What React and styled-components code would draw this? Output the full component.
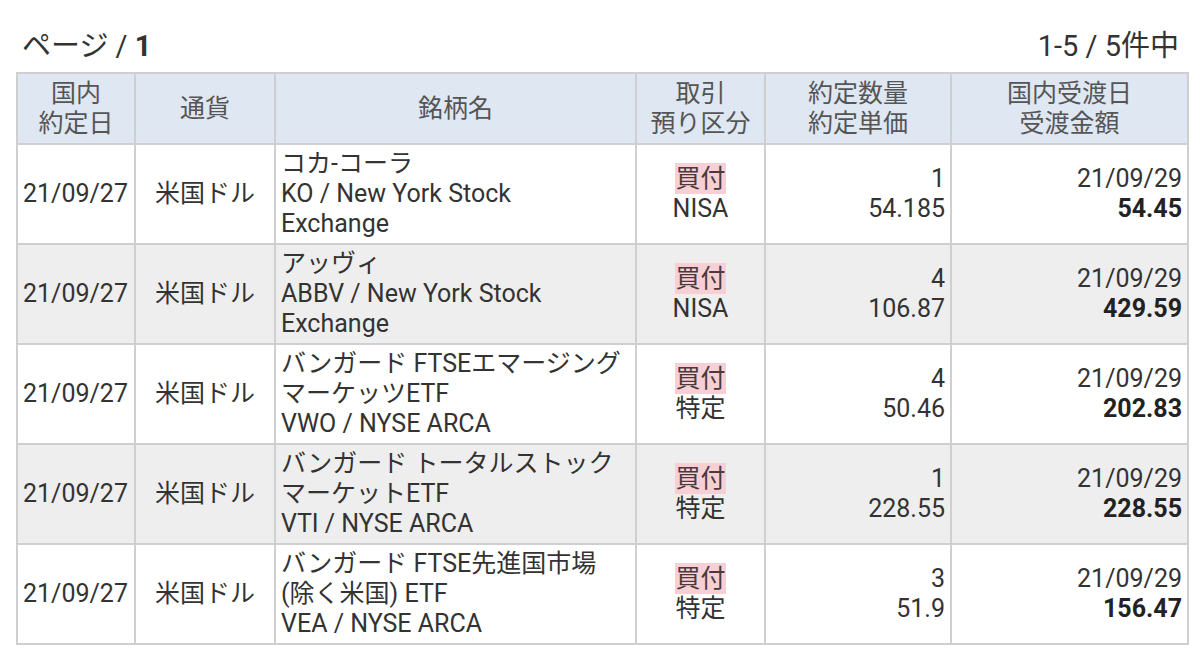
import React from 'react'
import styled, { createGlobalStyle } from 'styled-components'

const GlobalStyle = createGlobalStyle`
    body {
        margin: 0;
        background: #fff;
        font-family: Roboto, "Noto Sans CJK JP", sans-serif;
        color: #333;
    }
`;

const rows = [
    { date: '21/09/27', cur: '米国ドル', name: ['コカ-コーラ', 'KO / New York Stock', 'Exchange'], kind: '買付', acct: 'NISA', qty: '1', price: '54.185', settle: '21/09/29', amount: '54.45' },
    { date: '21/09/27', cur: '米国ドル', name: ['アッヴィ', 'ABBV / New York Stock', 'Exchange'], kind: '買付', acct: 'NISA', qty: '4', price: '106.87', settle: '21/09/29', amount: '429.59' },
    { date: '21/09/27', cur: '米国ドル', name: ['バンガード FTSEエマージング', 'マーケッツETF', 'VWO / NYSE ARCA'], kind: '買付', acct: '特定', qty: '4', price: '50.46', settle: '21/09/29', amount: '202.83' },
    { date: '21/09/27', cur: '米国ドル', name: ['バンガード トータルストック', 'マーケットETF', 'VTI / NYSE ARCA'], kind: '買付', acct: '特定', qty: '1', price: '228.55', settle: '21/09/29', amount: '228.55' },
    { date: '21/09/27', cur: '米国ドル', name: ['バンガード FTSE先進国市場', '(除く米国) ETF', 'VEA / NYSE ARCA'], kind: '買付', acct: '特定', qty: '3', price: '51.9', settle: '21/09/29', amount: '156.47' },
];

const widths = [118, 140, 361, 129, 186, 237];

export default function App() {
    return (
        <Page>
            <GlobalStyle />
            <TopBar>
                <span>ページ / <b>1</b></span>
                <span>1-5 / 5件中</span>
            </TopBar>
            <Table>
                <colgroup>
                    {widths.map((w, i) => <col key={i} style={{ width: w }} />)}
                </colgroup>
                <thead>
                    <tr>
                        <Th>国内<br />約定日</Th>
                        <Th>通貨</Th>
                        <Th>銘柄名</Th>
                        <Th>取引<br />預り区分</Th>
                        <Th>約定数量<br />約定単価</Th>
                        <Th>国内受渡日<br />受渡金額</Th>
                    </tr>
                </thead>
                <tbody>
                    {rows.map((r, i) => (
                        <Row key={i} $shaded={i % 2 === 1}>
                            <Td>{r.date}</Td>
                            <Td $align="center">{r.cur}</Td>
                            <Td>{r.name.map((l, j) => <Line key={j}>{l}</Line>)}</Td>
                            <Td $align="center">
                                <Line><Trade>{r.kind}</Trade></Line>
                                <Line>{r.acct}</Line>
                            </Td>
                            <Td $align="right">
                                <Line>{r.qty}</Line>
                                <Line>{r.price}</Line>
                            </Td>
                            <Td $align="right">
                                <Line>{r.settle}</Line>
                                <Line><b>{r.amount}</b></Line>
                            </Td>
                        </Row>
                    ))}
                </tbody>
            </Table>
        </Page>
    )
}

const Page = styled.div`
    padding: 30px 12px 0 16px;
    width: 1173px;
`;

const TopBar = styled.div`
    display: flex;
    justify-content: space-between;
    align-items: flex-end;
    font-size: 29px;
    line-height: 32px;
    padding: 0 10px 10px 6px;
    color: #333;
    b {
        font-weight: 700;
    }
`;

const Table = styled.table`
    border-collapse: collapse;
    table-layout: fixed;
    width: 1172px;
    font-size: 25px;
    line-height: 30px;
`;

const Th = styled.th`
    background: #dfe7f3;
    color: #555;
    font-weight: 400;
    height: 69px;
    padding: 0 4px;
    border: 2px solid #cfcfcf;
    text-align: center;
    vertical-align: middle;
`;

const Row = styled.tr`
    background: ${p => (p.$shaded ? '#eeeeee' : '#ffffff')};
`;

const Td = styled.td`
    height: 98px;
    padding: 0 5px;
    border: 2px solid #cfcfcf;
    text-align: ${p => p.$align || 'left'};
    vertical-align: middle;
    white-space: nowrap;
    overflow: hidden;
    color: #333;
    b {
        font-weight: 700;
        color: #222;
    }
`;

const Line = styled.div`
    line-height: 30px;
`;

const Trade = styled.span`
    background: #f7cfd4;
    color: #4a3a3a;
    padding: 1px 0;
`;
